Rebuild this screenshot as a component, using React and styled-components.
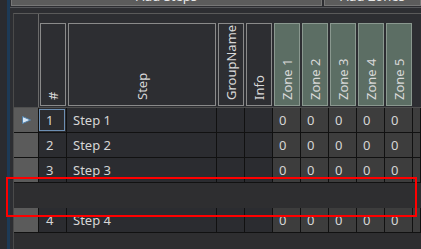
import styled, { createGlobalStyle } from 'styled-components'

const Global = createGlobalStyle`
  html, body { margin:0; padding:0; background:#2d2e32; }
  body { width:421px; height:249px; overflow:hidden; font-family:"Noto Sans","Open Sans",sans-serif; font-size:13px; color:#d6d6d6; }
`

/* ── Styled ── */
const Page       = styled.div`position:relative;display:flex;width:421px;height:249px;overflow:hidden;background:#2d2e32;`
const LeftEdge   = styled.div`width:7px;flex:none;background:#2a2b2f;`
const BlueStrip  = styled.div`width:3px;flex:none;background:#1d3a56;`
const Main       = styled.div`flex:1;display:flex;flex-direction:column;min-width:0;`

const Toolbar    = styled.div`display:flex;gap:2px;padding-left:1px;margin-top:-14px;`
const ToolBtn    = styled.div`
  height:19px;display:flex;align-items:center;justify-content:center;
  background:#5c5c5c;border:1px solid #777;border-top:none;
  ${({ $w }) => $w ? `width:${$w}px;flex:none;` : 'flex:1;'}
  color:#e8e8e8;font-size:13px;
`
const Divider    = styled.div`height:1px;margin:1px 0 5px;background:#56575b;`

const Frame      = styled.div`margin-left:3px;border-top:1px solid #5a5a5a;border-left:1px solid #4a4a4a;flex:1;display:flex;flex-direction:column;background:#2e2e30;`

const HeadRow    = styled.div`display:flex;height:93px;border-bottom:1px solid #4e4e4e;background:#2d2e32;`
const Corner     = styled.div`width:24px;flex:none;border-right:1px solid #6a6a6a;`
const HeadCol    = styled.div`width:${({ $w }) => $w}px;flex:none;display:flex;padding:9px 1px 1px;box-sizing:border-box;`
const HeadBox    = styled.div`
  flex:1;display:flex;justify-content:center;
  border:1px solid ${({ $zone }) => $zone ? '#8a988f' : '#8a8a8a'};
  background:${({ $zone }) => $zone ? '#5c6e64' : 'transparent'};
  padding-bottom:5px;
`
const HeadText   = styled.div`writing-mode:vertical-rl;transform:rotate(180deg);white-space:nowrap;color:#d8d8d8;font-size:13px;line-height:1;`

const Row        = styled.div`display:flex;height:24px;border-bottom:1px solid #111;flex:none;`
const BlankRow   = styled.div`height:25px;flex:none;background:#2e2e30;`
const RowHead    = styled.div`width:24px;flex:none;background:#5b5b5b;border-right:1px solid #111;display:flex;align-items:center;justify-content:center;`
const Cell       = styled.div`
  width:${({ $w }) => $w}px;flex:${({ $w }) => $w ? 'none' : 1};box-sizing:border-box;
  border-right:1px solid #111;display:flex;align-items:center;padding-left:${({ $pad }) => $pad ?? 6}px;
  background:${({ $zone }) => $zone ? '#3d3d3d' : '#2b2c30'};
  white-space:nowrap;overflow:hidden;
`
const SelBox     = styled.div`align-self:stretch;flex:1;margin:1px 1px 1px -7px;border:1px solid #6d8fb3;display:flex;align-items:center;padding-left:6px;`

const Marker     = styled.div`position:absolute;left:6px;top:177px;width:407px;height:36px;border:2px solid #ff0000;pointer-events:none;`

const COLS = [
  { key:'num',   label:'#',         w:28 },
  { key:'step',  label:'Step',      w:150 },
  { key:'group', label:'GroupName', w:28 },
  { key:'info',  label:'Info',      w:28 },
  { key:'z1',    label:'Zone 1',    w:28, zone:true },
  { key:'z2',    label:'Zone 2',    w:28, zone:true },
  { key:'z3',    label:'Zone 3',    w:28, zone:true },
  { key:'z4',    label:'Zone 4',    w:28, zone:true },
  { key:'z5',    label:'Zone 5',    w:28, zone:true },
]

const ROWS = [
  { n:1, name:'Step 1', current:true },
  { n:2, name:'Step 2' },
  { n:3, name:'Step 3' },
  null,
  { n:4, name:'Step 4' },
]

const Arrow = () => (
  <svg width="9" height="8" viewBox="0 0 9 8">
    <path d="M0.5 0.5 L8.5 4 L0.5 7.5 Z" fill="#d6e6f5" stroke="#4f7fa8" strokeWidth="1" />
  </svg>
)

const DataRow = ({ row }) => (
  <Row>
    <RowHead>{row.current && <Arrow />}</RowHead>
    <Cell $w={28} $pad={7}>
      {row.current ? <SelBox>{row.n}</SelBox> : row.n}
    </Cell>
    <Cell $w={150}>{row.name}</Cell>
    <Cell $w={28} />
    <Cell $w={28} />
    {[1, 2, 3, 4, 5].map(z => <Cell key={z} $w={28} $zone>0</Cell>)}
    <Cell $zone />
  </Row>
)

export default function App() {
  return (
    <>
      <Global />
      <Page>
        <LeftEdge />
        <BlueStrip />
        <Main>
          <Toolbar>
            <ToolBtn $w={309}>Add Steps</ToolBtn>
            <ToolBtn>Add Zones</ToolBtn>
          </Toolbar>
          <Divider />
          <Frame>
            <HeadRow>
              <Corner />
              {COLS.map(c => (
                <HeadCol key={c.key} $w={c.w}>
                  <HeadBox $zone={c.zone}><HeadText>{c.label}</HeadText></HeadBox>
                </HeadCol>
              ))}
            </HeadRow>
            {ROWS.map((r, i) => r ? <DataRow key={i} row={r} /> : <BlankRow key={i} />)}
          </Frame>
        </Main>
        <Marker />
      </Page>
    </>
  )
}
